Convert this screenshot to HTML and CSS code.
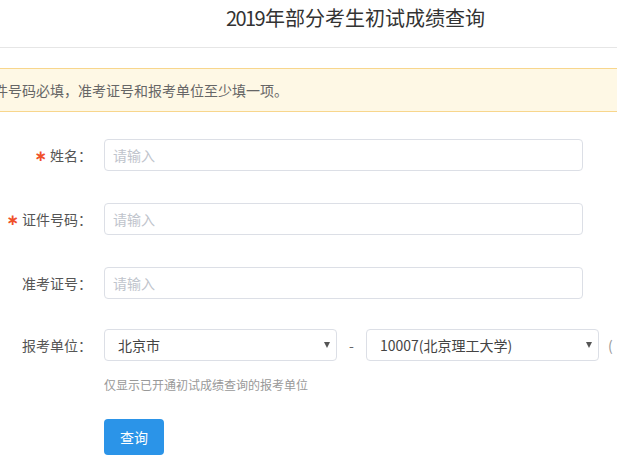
FILE: index.html
```html
<!DOCTYPE html>
<html lang="zh-CN">
<head>
<meta charset="utf-8">
<title>2019年部分考生初试成绩查询</title>
<link rel="stylesheet" href="styles.css">
</head>
<body>
<div class="page">
  <header class="header">
    <h1 class="title"><span class="num">2019</span>年部分考生初试成绩查询</h1>
  </header>
  <div class="alert">姓名和证件号码必填，准考证号和报考单位至少填一项。</div>
  <form class="form">
    <div class="row">
      <label class="label"><span class="req">∗</span>姓名：</label>
      <div class="input"><span class="ph">请输入</span></div>
    </div>
    <div class="row">
      <label class="label"><span class="req">∗</span>证件号码：</label>
      <div class="input"><span class="ph">请输入</span></div>
    </div>
    <div class="row row-3">
      <label class="label">准考证号：</label>
      <div class="input"><span class="ph">请输入</span></div>
    </div>
    <div class="row row-4">
      <label class="label">报考单位：</label>
      <div class="select"><span class="val">北京市</span><span class="arrow"></span></div>
      <span class="dash">-</span>
      <div class="select"><span class="val">10007(北京理工大学)</span><span class="arrow"></span></div>
      <span class="extra">(</span>
    </div>
    <div class="hint">仅显示已开通初试成绩查询的报考单位</div>
    <div class="actions">
      <button type="button" class="btn">查询</button>
    </div>
  </form>
</div>
</body>
</html>
```
FILE: styles.css
```css
html, body {
  margin: 0;
  padding: 0;
  overflow: hidden;
  background: #fff;
}
body {
  font-family: "Noto Sans CJK SC", "Noto Sans", sans-serif;
  color: #555;
}
.page {
  width: 617px;
}
.header {
  height: 48px;
  border-bottom: 1px solid #e6e6e6;
  box-sizing: border-box;
  padding-left: 226px;
}
.title {
  margin: 0;
  padding-top: 5px;
  font-size: 20px;
  font-weight: normal;
  color: #333;
  line-height: 26px;
  white-space: nowrap;
}
.num {
  letter-spacing: -1.6px;
  margin-right: 1px;
}
.alert {
  margin: 20px -40px 0 -69px;
  height: 44px;
  box-sizing: border-box;
  border: 1px solid #f8d68c;
  background: #fef8e5;
  padding-left: 6px;
  font-size: 14px;
  line-height: 42px;
  color: #666;
  white-space: nowrap;
}
.form {
  margin-top: 27px;
}
.row {
  display: flex;
  align-items: center;
  height: 32px;
  margin-bottom: 32px;
  white-space: nowrap;
}
.row-3 {
  margin-bottom: 30px;
}
.row-4 {
  margin-bottom: 0;
}
.label {
  width: 104px;
  box-sizing: border-box;
  padding-right: 12px;
  text-align: right;
  font-size: 14px;
  color: #555;
  flex: none;
}
.req {
  font-family: "DejaVu Sans", sans-serif;
  font-size: 15px;
  font-weight: bold;
  color: #f0502a;
  margin-right: 3px;
}
.input {
  width: 479px;
  height: 32px;
  box-sizing: border-box;
  border: 1px solid #dcdfe6;
  border-radius: 4px;
  padding-left: 8px;
  display: flex;
  align-items: center;
  flex: none;
}
.ph {
  font-size: 14px;
  color: #c0c4cc;
}
.select {
  width: 233px;
  height: 32px;
  box-sizing: border-box;
  border: 1px solid #dcdfe6;
  border-radius: 4px;
  padding: 0 6px 0 13px;
  display: flex;
  align-items: center;
  justify-content: space-between;
  flex: none;
}
.val {
  font-size: 14px;
  color: #444;
}
.arrow {
  width: 0;
  height: 0;
  border-left: 3px solid transparent;
  border-right: 3px solid transparent;
  border-top: 6px solid #555;
}
.dash {
  width: 29px;
  text-align: center;
  font-size: 14px;
  color: #666;
  flex: none;
}
.extra {
  margin-left: 9px;
  font-size: 14px;
  color: #999;
}
.hint {
  margin: 14px 0 0 104px;
  font-size: 12px;
  line-height: 20px;
  color: #999;
}
.actions {
  margin: 24px 0 0 104px;
}
.btn {
  width: 60px;
  height: 36px;
  border: none;
  border-radius: 4px;
  background: #2b94e8;
  color: #fff;
  font-family: inherit;
  font-size: 14px;
  padding: 0;
  cursor: pointer;
}
```
